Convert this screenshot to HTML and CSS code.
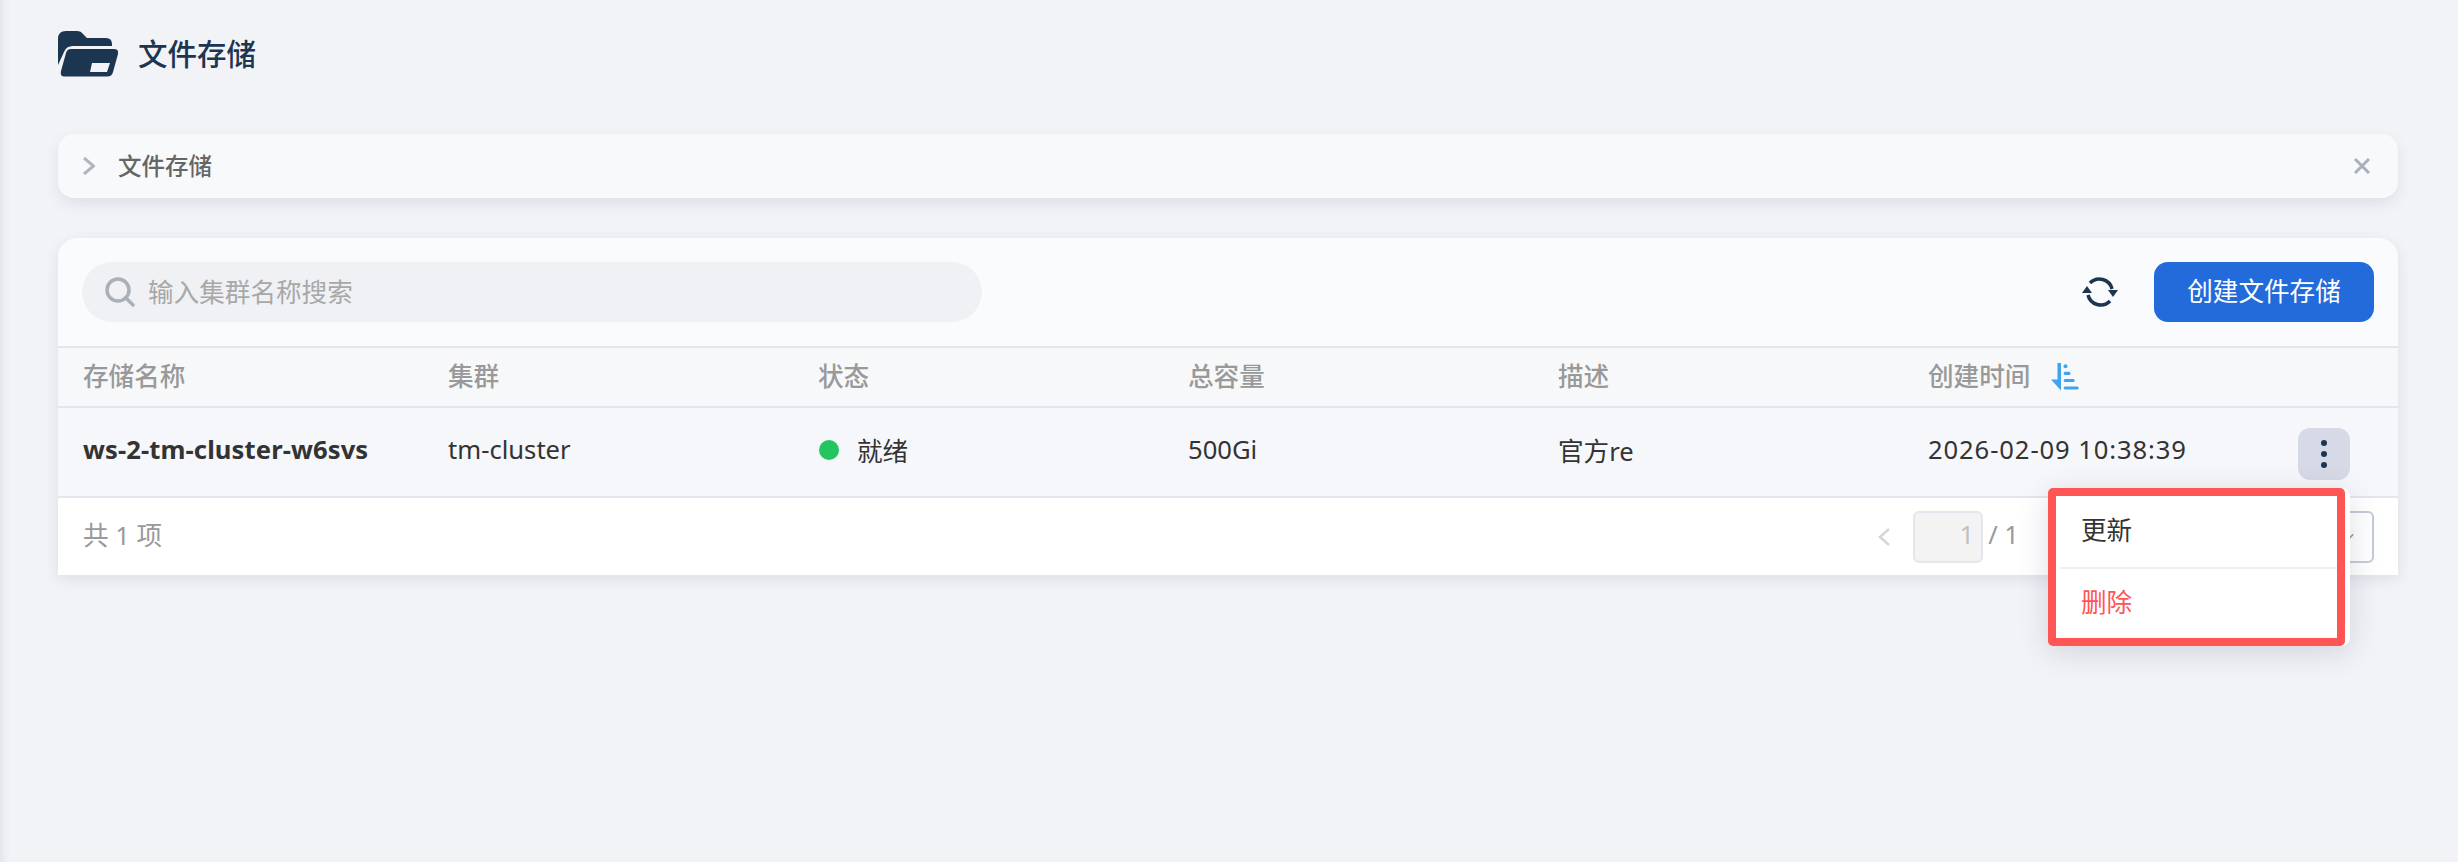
FILE: index.html
```html
<!DOCTYPE html>
<html>
<head>
<meta name="viewport" content="width=device-width, initial-scale=1">
<title>文件存储</title>
<link rel="stylesheet" href="styles.css">
</head>
<body>

<div class="page">
  <div class="pageHead">
    <svg class="folderIcon" viewBox="0 0 60 46">
      <path d="M0 8Q0 0 8 0H19Q23 0 25 3L29 7H48Q54 7 54 13V15H15Q8 15 6 21L0 34Z"/>
      <path fill-rule="evenodd" d="M13 18H56Q61 18 60 23L55 41Q54 45.500 49 45.500H6Q2 45.500 3 40L8 22Q9 18 13 18ZM34 32H52L49 41H32Z"/>
    </svg>
    <h2 class="pageTitle">文件存储</h2>
  </div>

  <div class="crumb">
    <svg class="crumbArrow" viewBox="0 0 12 18"><path d="M1 1L10.500 9L1 17"/></svg>
    <span class="crumbText">文件存储</span>
    <svg class="crumbClose" viewBox="0 0 16 16"><path d="M1 1L15 15M15 1L1 15"/></svg>
  </div>

  <div class="card">
    <div class="toolbar">
      <div class="search">
        <svg class="searchIcon" viewBox="0 0 30 30"><circle cx="13" cy="13" r="11"/><path d="M21 21L28 28"/></svg>
        <span class="searchHint">输入集群名称搜索</span>
      </div>
      <svg class="refreshIcon" viewBox="0 0 36 30">
        <path class="arc" d="M8 6A13 13 0 0 1 30 12"/>
        <path class="arc" d="M6 18A13 13 0 0 0 28 24"/>
        <path d="M26 13H36L31 20Z"/>
        <path d="M0 16H10L5 9Z"/>
      </svg>
      <span class="addBtn">创建文件存储</span>
    </div>

    <div class="row headRow">
      <span>存储名称</span>
      <span>集群</span>
      <span>状态</span>
      <span>总容量</span>
      <span>描述</span>
      <span class="sortCell">创建时间
        <svg class="sortIcon" viewBox="0 0 28 28">
          <path d="M6.500 0H10V27.500L0 16.500H6.500Z"/>
          <circle cx="14.500" cy="3.300" r="2"/>
          <rect x="12.700" y="8.800" width="6.800" height="3.200" rx="1.500"/>
          <rect x="12.700" y="16" width="11" height="3" rx="1.500"/>
          <rect x="12.700" y="23.400" width="15" height="3" rx="1.500"/>
        </svg>
      </span>
    </div>

    <div class="row bodyRow">
      <span class="nameCell">ws-2-tm-cluster-w6svs</span>
      <span>tm-cluster</span>
      <span class="statusCell"><i class="dot"></i>就绪</span>
      <span>500Gi</span>
      <span>官方re</span>
      <span class="dateCell">2026-02-09 10:38:39</span>
      <span class="moreBtn"><i></i><i></i><i></i></span>
    </div>

    <div class="footer">
      <span class="total">共 1 项</span>
      <div class="pager">
        <svg class="prevIcon" viewBox="0 0 14 20"><path d="M12 2L3 10L12 18"/></svg>
        <span class="pageBox">1</span>
        <span class="pageCount">/ 1</span>
        <span class="sizeBox"><svg class="sizeArrow" viewBox="0 0 14 8"><path d="M1 1L7 7L13 1"/></svg></span>
      </div>
    </div>

    <ul class="menu">
      <li>更新</li>
      <li class="danger">删除</li>
    </ul>
  </div>
</div>

</body>
</html>
```

FILE: styles.css
```css
* {
  box-sizing: border-box;
}

html, body {
  height: 100%;
}

body {
  margin: 0;
  background: #f2f3f7;
  box-shadow: inset 10px 0 10px -8px rgba(60, 70, 100, 0.1);
  font-family: "Noto Sans", "Noto Sans CJK SC", sans-serif;
  font-size: 25.6px;
  color: #333;
}

.page {
  padding: 0 60px 0 58px;
}

/* Page title */
.pageHead {
  display: flex;
  align-items: center;
  gap: 20px;
  height: 134px;
  padding-bottom: 28px;
}

.folderIcon {
  width: 60px;
  height: 46px;
  margin-top: 2px;
  fill: #1c3550;
}

.pageTitle {
  margin: 0 0 2px;
  font-size: 29.5px;
  font-weight: 500;
  color: #1c3550;
}

/* Breadcrumb panel */
.crumb {
  display: flex;
  align-items: center;
  height: 64px;
  padding: 0 28px 0 25px;
  background: #f8f9fb;
  border-radius: 16px;
  box-shadow: 0 6px 14px rgba(60, 70, 100, 0.1);
}

.crumbArrow {
  width: 12px;
  height: 18px;
  fill: none;
  stroke: #b0b5c0;
  stroke-width: 3;
}

.crumbText {
  margin: 0 0 3px 23px;
  font-size: 23.5px;
  font-weight: 500;
  color: #666;
}

.crumbClose {
  width: 16px;
  height: 16px;
  margin-left: auto;
  fill: none;
  stroke: #a9afbb;
  stroke-width: 3;
}

/* Table card */
.card {
  position: relative;
  margin-top: 40px;
  background: #fff;
  border-radius: 20px 20px 0 0;
  box-shadow: 0 4px 14px rgba(60, 70, 100, 0.12);
}

.toolbar {
  display: flex;
  align-items: center;
  height: 108px;
  padding: 0 24px;
  background: #fafbfd;
  border-radius: 20px 20px 0 0;
}

.search {
  display: flex;
  align-items: center;
  width: 900px;
  height: 60px;
  padding-left: 23px;
  background: #f0f1f5;
  border-radius: 30px;
}

.searchIcon {
  width: 30px;
  height: 30px;
  fill: none;
  stroke: #a9b0b8;
  stroke-width: 3.500;
  stroke-linecap: round;
}

.searchHint {
  margin: 0 0 2px 13px;
  color: #a8a8a8;
}

.refreshIcon {
  width: 36px;
  height: 30px;
  margin-left: auto;
  fill: #1c3550;
}

.refreshIcon .arc {
  fill: none;
  stroke: #1c3550;
  stroke-width: 3.500;
}

.addBtn {
  display: flex;
  align-items: center;
  justify-content: center;
  width: 220px;
  height: 60px;
  margin-left: 36px;
  padding-bottom: 4px;
  background: #236bdb;
  border-radius: 14px;
  color: #fff;
}

/* Rows */
.row {
  display: grid;
  grid-template-columns: 365px 370px 370px 370px 370px 1fr;
  align-items: center;
  padding-left: 25px;
  border-top: 2px solid #e4e6ee;
}

.headRow {
  height: 60px;
  padding-bottom: 5px;
  background: #f7f8fa;
  color: #999;
  font-weight: 500;
}

.sortCell {
  display: flex;
  align-items: center;
  gap: 21px;
}

.sortIcon {
  width: 28px;
  height: 28px;
  margin-top: 5px;
  fill: #3fa4ee;
}

.bodyRow {
  position: relative;
  height: 90px;
  padding-bottom: 5px;
  background: #f6f7fa;
}

.nameCell {
  font-weight: 700;
  letter-spacing: 0.1px;
}

.dateCell {
  letter-spacing: 0.9px;
}

.statusCell {
  display: flex;
  align-items: center;
  gap: 18px;
  margin-left: 1px;
}

.dot {
  width: 20px;
  height: 20px;
  background: #22c55e;
  border-radius: 50%;
}

.moreBtn {
  position: absolute;
  top: 20px;
  right: 48px;
  display: flex;
  flex-direction: column;
  align-items: center;
  justify-content: center;
  gap: 5px;
  width: 52px;
  height: 52px;
  background: #d6dae6;
  border-radius: 12px;
}

.moreBtn i {
  width: 6px;
  height: 6px;
  background: #1c3550;
  border-radius: 50%;
}

/* Footer */
.footer {
  display: flex;
  align-items: center;
  justify-content: space-between;
  height: 79px;
  padding: 0 24px 0 25px;
  background: #fff;
  border-top: 2px solid #e4e6ee;
}

.total {
  margin-bottom: 5px;
  color: #999;
}

.pager {
  display: flex;
  align-items: center;
}

.prevIcon {
  width: 14px;
  height: 20px;
  fill: none;
  stroke: #d4d6da;
  stroke-width: 2.500;
}

.pageBox {
  width: 70px;
  height: 52px;
  margin-left: 22px;
  padding-right: 7px;
  background: #f3f3f3;
  border: 2px solid #e3e6ed;
  border-radius: 6px;
  color: #c0c0c0;
  line-height: 44px;
  text-align: right;
}

.pageCount {
  margin: 0 0 4px 5px;
  color: #999;
}

.sizeBox {
  display: flex;
  align-items: center;
  justify-content: flex-end;
  width: 90px;
  height: 52px;
  margin-left: 265px;
  padding-right: 18px;
  border: 2px solid #c5cad8;
  border-radius: 6px;
}

.sizeArrow {
  width: 12px;
  height: 8px;
  fill: none;
  stroke: #999;
  stroke-width: 2;
}

/* Row action menu, with the red highlight box over it */
.menu {
  position: absolute;
  top: 250px;
  right: 48px;
  width: 302px;
  height: 158px;
  margin: 0;
  padding: 8px 13px 8px 12px;
  list-style-type: none;
  background: #fff;
  border-radius: 8px;
  box-shadow: 0 6px 30px rgba(60, 70, 100, 0.18);
}

.menu::after {
  content: "";
  position: absolute;
  top: 0;
  left: 0;
  box-sizing: border-box;
  width: 297px;
  height: 158px;
  border: 8px solid #ff5555;
  border-radius: 5px;
}

.menu li {
  display: flex;
  align-items: center;
  height: 71px;
  padding: 0 0 5px 21px;
}

.menu li.danger {
  border-top: 2px solid #efeff3;
  color: #ff5555;
}
```
